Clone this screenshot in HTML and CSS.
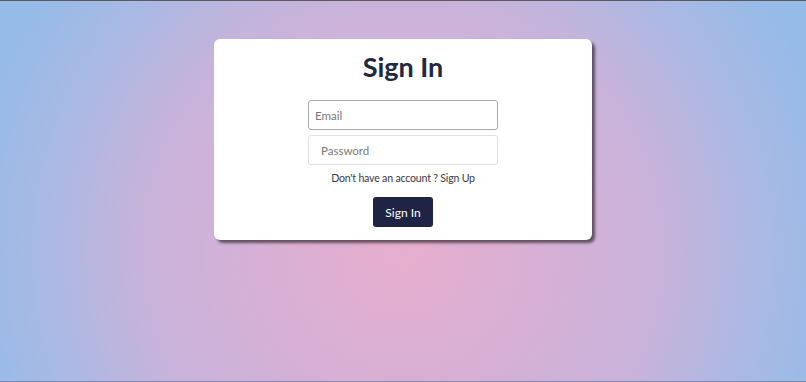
FILE: index.html
```html
<!DOCTYPE html>
<html>
<head>
<meta charset="utf-8">
<link rel="stylesheet" href="styles.css">
</head>
<body>
<div class="page">
  <div class="card">
    <h1 class="title">Sign In</h1>
    <form class="form">
      <input class="field field-email" type="text" placeholder="Email">
      <input class="field field-pass" type="password" placeholder="Password">
      <p class="note">Don't have an account ? <span class="link">Sign Up</span></p>
      <button class="btn" type="button">Sign In</button>
    </form>
  </div>
</div>
</body>
</html>
```
FILE: styles.css
```css
html, body {
  margin: 0;
  padding: 0;
  height: 100%;
}
body {
  font-family: "Lato", "Open Sans", sans-serif;
  box-sizing: border-box;
  border-top: 1px solid #5a5a60;
  border-bottom: 1px solid #7c8bb4;
  background: radial-gradient(circle at 50% 66%, #e6aecd 0px, #d6b0d6 150px, #c8b3da 260px, #a9b9e4 360px, #97bbe8 440px);
  overflow: hidden;
}
.page {
  display: flex;
  justify-content: center;
  padding-top: 38px;
}
.card {
  width: 378px;
  height: 201px;
  box-sizing: border-box;
  background: #fff;
  border-radius: 6px;
  box-shadow: 3px 3px 3px rgba(0, 0, 0, 0.55);
  display: flex;
  flex-direction: column;
  align-items: center;
  padding-top: 12px;
}
.title {
  margin: 0;
  font-size: 27px;
  font-weight: 700;
  color: #222843;
  line-height: 32px;
}
.form {
  display: flex;
  flex-direction: column;
  align-items: center;
  margin-top: 17px;
}
.field {
  width: 190px;
  height: 30px;
  box-sizing: border-box;
  border: 1px solid #d4d4d4;
  border-radius: 3px;
  font-family: "Lato", sans-serif;
  font-size: 11.5px;
  padding: 0 6px;
  outline: none;
  background: #fff;
}
.field::placeholder {
  color: #7a7a7a;
}
.field-email {
  border-color: #a8a8a8;
}
.field-pass {
  margin-top: 5px;
  border-color: #e0e0e0;
  padding-left: 12px;
}
.note {
  margin: 6px 0 0;
  font-family: "Lato", sans-serif;
  font-size: 10.6px;
  letter-spacing: -0.2px;
  line-height: 14px;
  color: #3a3a44;
}
.btn {
  margin-top: 12px;
  width: 60px;
  height: 30px;
  border: none;
  border-radius: 3px;
  background: #1f2445;
  color: #fff;
  font-family: "Lato", sans-serif;
  font-size: 12px;
  padding: 0;
}
```
